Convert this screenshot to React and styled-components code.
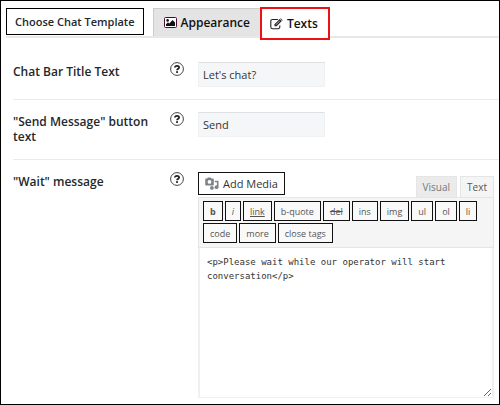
import React, { useState } from 'react';
import styled, { createGlobalStyle } from 'styled-components';

const GlobalStyle = createGlobalStyle`
  *, *::before, *::after {
    box-sizing: border-box;
  }
  body {
    margin: 0;
    background: #fff;
    color: #23282d;
    font-family: 'Open Sans', 'Noto Sans', sans-serif;
  }
  button, input, textarea {
    margin: 0;
    font-family: inherit;
    color: inherit;
  }
`;

const Page = styled.main`
  display: flex;
  flex-direction: column;
  min-height: 100vh;
  border: 1px solid #000;
  padding: 6px 0 6px 5px;
`;

const TabBar = styled.nav`
  display: flex;
  align-items: flex-start;
  height: 31px;
  border-bottom: 2px solid #e8e8e8;
`;

const TemplateButton = styled.button`
  height: 27px;
  margin: 1px 9px 0 0;
  padding: 0 8px;
  border: 1px solid #000;
  background: #fff;
  font-size: 11px;
  font-weight: 600;
  line-height: 24px;
  white-space: nowrap;
`;

const Tab = styled.button`
  display: flex;
  align-items: center;
  gap: 4px;
  height: ${(p) => (p.$active ? 33 : 28)}px;
  margin-top: ${(p) => (p.$active ? 0 : 1)}px;
  margin-left: ${(p) => (p.$active ? -1 : 0)}px;
  padding: ${(p) => (p.$active ? '0 10px 0 8px' : '0 10px')};
  border: ${(p) => (p.$active ? '2px solid #ee1111' : '1px solid #ccc')};
  border-bottom-width: ${(p) => (p.$active ? 2 : 0)}px;
  background: ${(p) => (p.$active ? '#fff' : '#e4e4e4')};
  color: #111;
  font-size: 12px;
  font-weight: 600;
  line-height: 16px;
  white-space: nowrap;
  z-index: ${(p) => (p.$active ? 1 : 0)};
`;

const Options = styled.div`
  display: flex;
  flex-direction: column;
  flex: 1;
  padding-left: 7px;
`;

const Row = styled.div`
  display: grid;
  grid-template-columns: 157px 28px minmax(0, 1fr);
  flex: ${(p) => (p.$grow ? '1' : 'none')};
  min-height: ${(p) => p.$height || 0}px;
  padding-top: ${(p) => p.$top || 26}px;
  border-bottom: ${(p) => (p.$grow ? 'none' : '1px solid #eaeaea')};
`;

const Label = styled.label`
  padding: 2px 16px 0 0;
  font-size: 12px;
  font-weight: 600;
  line-height: 15px;
`;

const HelpButton = styled.button`
  width: 14px;
  height: 14px;
  padding: 0;
  border: none;
  background: none;
  line-height: 0;
`;

const TextInput = styled.input`
  width: 127px;
  height: 25px;
  padding: 0 4px;
  border: 1px solid #f0f1f3;
  border-top-color: #dde1e3;
  background: #f5f6f8;
  color: #333;
  font-size: 11px;
`;

const Editor = styled.div`
  display: flex;
  flex-direction: column;
  margin-right: 5px;
`;

const EditorTop = styled.div`
  display: flex;
  align-items: flex-end;
  justify-content: space-between;
  height: 25px;
`;

const MediaButton = styled.button`
  display: flex;
  align-items: center;
  align-self: flex-start;
  gap: 4px;
  height: 23px;
  padding: 0 6px;
  border: 1px solid #111;
  background: #fff;
  color: #333;
  font-size: 11px;
  white-space: nowrap;
`;

const ModeTabs = styled.div`
  display: flex;
  gap: 3px;
  margin-bottom: -1px;
`;

const ModeTab = styled.button`
  height: 22px;
  padding: 0 6px;
  border: 1px solid #e5e5e5;
  border-bottom-color: ${(p) => (p.$active ? '#f5f5f5' : '#e5e5e5')};
  background: ${(p) => (p.$active ? '#f5f5f5' : '#ebebeb')};
  color: ${(p) => (p.$active ? '#555' : '#777')};
  font-size: 10px;
`;

const QuickBar = styled.div`
  display: flex;
  flex-wrap: wrap;
  gap: 2px;
  padding: 3px 4px 4px;
  border: 1px solid #e5e5e5;
  background: #f5f5f5;
`;

const QuickButton = styled.button`
  height: 20px;
  padding: 0 6px;
  border: 1px solid #111;
  background: #f9f9f9;
  color: #555;
  font-size: 9px;
  font-weight: ${(p) => (p.$kind === 'bold' ? 700 : 400)};
  font-style: ${(p) => (p.$kind === 'italic' ? 'italic' : 'normal')};
  text-decoration: ${(p) =>
    ({ link: 'underline', del: 'line-through' })[p.$kind] || 'none'};
`;

const Message = styled.textarea`
  display: block;
  flex: 1;
  width: 100%;
  min-height: 148px;
  padding: 7px;
  border: 2px solid #f0f0f0;
  border-top: none;
  border-bottom-width: 1px;
  background: #fff;
  color: #333;
  font-family: 'DejaVu Sans Mono', monospace;
  font-size: 9px;
  line-height: 14px;
  resize: vertical;
`;

const QUICK_TAGS = [
  { text: 'b', kind: 'bold' },
  { text: 'i', kind: 'italic' },
  { text: 'link', kind: 'link' },
  { text: 'b-quote' },
  { text: 'del', kind: 'del' },
  { text: 'ins' },
  { text: 'img' },
  { text: 'ul' },
  { text: 'ol' },
  { text: 'li' },
  { text: 'code' },
  { text: 'more' },
  { text: 'close tags' }
];

const PictureIcon = () => (
  <svg width="13" height="11" viewBox="0 0 13 11" aria-hidden="true">
    <rect x="0.5" y="0.5" width="12" height="10" rx="1" fill="#fff" stroke="#4a0d30" />
    <circle cx="3.6" cy="3.4" r="1.3" fill="#111" />
    <path d="M2 9V7.2l2-2 1.2 1.2L8.6 3 11 5.4V9z" fill="#111" />
  </svg>
);

const EditIcon = () => (
  <svg width="13" height="12" viewBox="0 0 13 12" aria-hidden="true">
    <path
      d="M8 1.5H2.4A1.6 1.6 0 0 0 .8 3.1v6a1.6 1.6 0 0 0 1.6 1.6h5.8a1.6 1.6 0 0 0 1.6-1.6V7.5"
      fill="none"
      stroke="#222"
      strokeWidth="1.1"
    />
    <path d="M4.5 8.3V6.2L9.7 1l2.1 2.1-5.2 5.2z" fill="#222" />
    <path d="M5.8 6.8l4-4" stroke="#fff" strokeWidth="0.7" />
    <path d="M10.2.6l.5-.4 2 2-.5.5z" fill="#222" />
  </svg>
);

const HelpIcon = () => (
  <svg width="14" height="14" viewBox="0 0 14 14" aria-hidden="true">
    <circle cx="7" cy="7" r="6.4" fill="#fff" stroke="#444" strokeWidth="1" />
    <path
      d="M4.9 5.5C5 4.3 5.8 3.8 7 3.8s2.1.6 2.1 1.6c0 1.3-2 1.3-2 2.9"
      fill="none"
      stroke="#222"
      strokeWidth="1.8"
    />
    <rect x="6.1" y="9.2" width="1.9" height="1.7" fill="#222" />
  </svg>
);

const MediaIcon = () => (
  <svg width="14" height="13" viewBox="0 0 14 13" aria-hidden="true">
    <path
      d="M1 1.5h1.2L2.8.5h2.9l.6 1H8q.8 0 .8.8v5.4q0 .8-.8.8H1q-.8 0-.8-.8V2.3q0-.8.8-.8z"
      fill="#7d8388"
    />
    <circle cx="4.5" cy="4.9" r="1.9" fill="#fff" />
    <path d="M9.8 4.5h2.9V10" fill="none" stroke="#7d8388" strokeWidth="1.6" />
    <circle cx="11.5" cy="10.2" r="1.9" fill="#7d8388" />
    <circle cx="6.9" cy="10.9" r="1.9" fill="#7d8388" />
  </svg>
);

const Help = ({ label }) => (
  <HelpButton type="button" aria-label={`Help: ${label}`}>
    <HelpIcon />
  </HelpButton>
);

const App = () => {
  const [tab, setTab] = useState('texts');
  const [mode, setMode] = useState('text');
  const [title, setTitle] = useState("Let's chat?");
  const [send, setSend] = useState('Send');
  const [wait, setWait] = useState(
    '<p>Please wait while our operator will start conversation</p>'
  );

  return (
    <>
      <GlobalStyle />
      <Page>
        <TabBar>
          <TemplateButton type="button">Choose Chat Template</TemplateButton>
          <Tab
            type="button"
            $active={tab === 'appearance'}
            onClick={() => setTab('appearance')}>
            <PictureIcon />
            Appearance
          </Tab>
          <Tab
            type="button"
            $active={tab === 'texts'}
            onClick={() => setTab('texts')}>
            <EditIcon />
            Texts
          </Tab>
        </TabBar>
        <Options>
          <Row $height={62} $top={24}>
            <Label htmlFor="title">Chat Bar Title Text</Label>
            <Help label="Chat Bar Title Text" />
            <TextInput
              id="title"
              value={title}
              onChange={(e) => setTitle(e.target.value)}
            />
          </Row>
          <Row $height={60} $top={12}>
            <Label htmlFor="send">"Send Message" button text</Label>
            <Help label="Send Message button text" />
            <TextInput
              id="send"
              value={send}
              onChange={(e) => setSend(e.target.value)}
            />
          </Row>
          <Row $grow $top={12}>
            <Label htmlFor="wait">"Wait" message</Label>
            <Help label="Wait message" />
            <Editor>
              <EditorTop>
                <MediaButton type="button">
                  <MediaIcon />
                  Add Media
                </MediaButton>
                <ModeTabs>
                  <ModeTab
                    type="button"
                    $active={mode === 'visual'}
                    onClick={() => setMode('visual')}>
                    Visual
                  </ModeTab>
                  <ModeTab
                    type="button"
                    $active={mode === 'text'}
                    onClick={() => setMode('text')}>
                    Text
                  </ModeTab>
                </ModeTabs>
              </EditorTop>
              <QuickBar>
                {QUICK_TAGS.map((item) => (
                  <QuickButton key={item.text} type="button" $kind={item.kind}>
                    {item.text}
                  </QuickButton>
                ))}
              </QuickBar>
              <Message
                id="wait"
                value={wait}
                onChange={(e) => setWait(e.target.value)}
              />
            </Editor>
          </Row>
        </Options>
      </Page>
    </>
  );
};

export default App;
